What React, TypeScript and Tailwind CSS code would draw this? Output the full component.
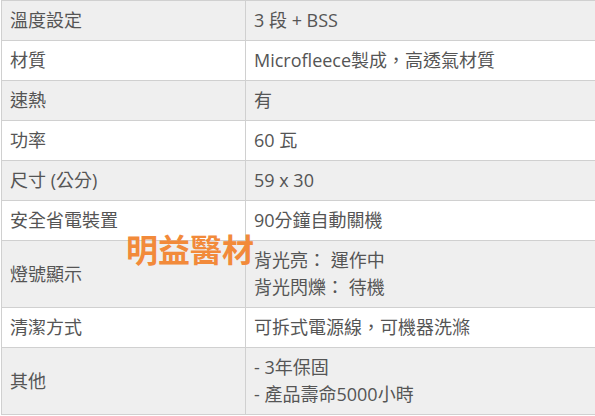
const rows: { label: string; value: string[] }[] = [
  { label: "溫度設定", value: ["3 段 + BSS"] },
  { label: "材質", value: ["Microfleece製成，高透氣材質"] },
  { label: "速熱", value: ["有"] },
  { label: "功率", value: ["60 瓦"] },
  { label: "尺寸 (公分)", value: ["59 x 30"] },
  { label: "安全省電裝置", value: ["90分鐘自動關機"] },
  { label: "燈號顯示", value: ["背光亮： 運作中", "背光閃爍： 待機"] },
  { label: "清潔方式", value: ["可拆式電源線，可機器洗滌"] },
  { label: "其他", value: ["- 3年保固", "- 產品壽命5000小時"] },
];

export default function App() {
  return (
    <div
      className="relative w-[595px] h-[416px] overflow-hidden bg-white text-[18px] leading-[27px] text-[#555]"
      style={{ fontFamily: '"Open Sans", "Noto Sans CJK TC", sans-serif' }}
    >
      <div className="ml-[1px] w-[620px] border-t border-l border-[#d0d0d0]">
        {rows.map((r, i) => (
          <div
            key={r.label}
            className={`grid grid-cols-[244px_1fr] border-b border-[#d0d0d0] ${i % 2 === 0 ? "bg-[#efefef]" : "bg-white"}`}
          >
            <div className="flex items-center border-r border-[#d0d0d0] px-[8px] py-[6px]">{r.label}</div>
            <div className="px-[8px] py-[6px]">
              {r.value.map((v) => (
                <div key={v}>{v}</div>
              ))}
            </div>
          </div>
        ))}
      </div>
      <div
        className="absolute left-[126px] top-[228px] text-[32px] font-bold leading-[40px] text-[#f28a3a]"
        style={{ fontFamily: '"Noto Sans CJK TC", sans-serif' }}
      >
        明益醫材
      </div>
    </div>
  );
}
